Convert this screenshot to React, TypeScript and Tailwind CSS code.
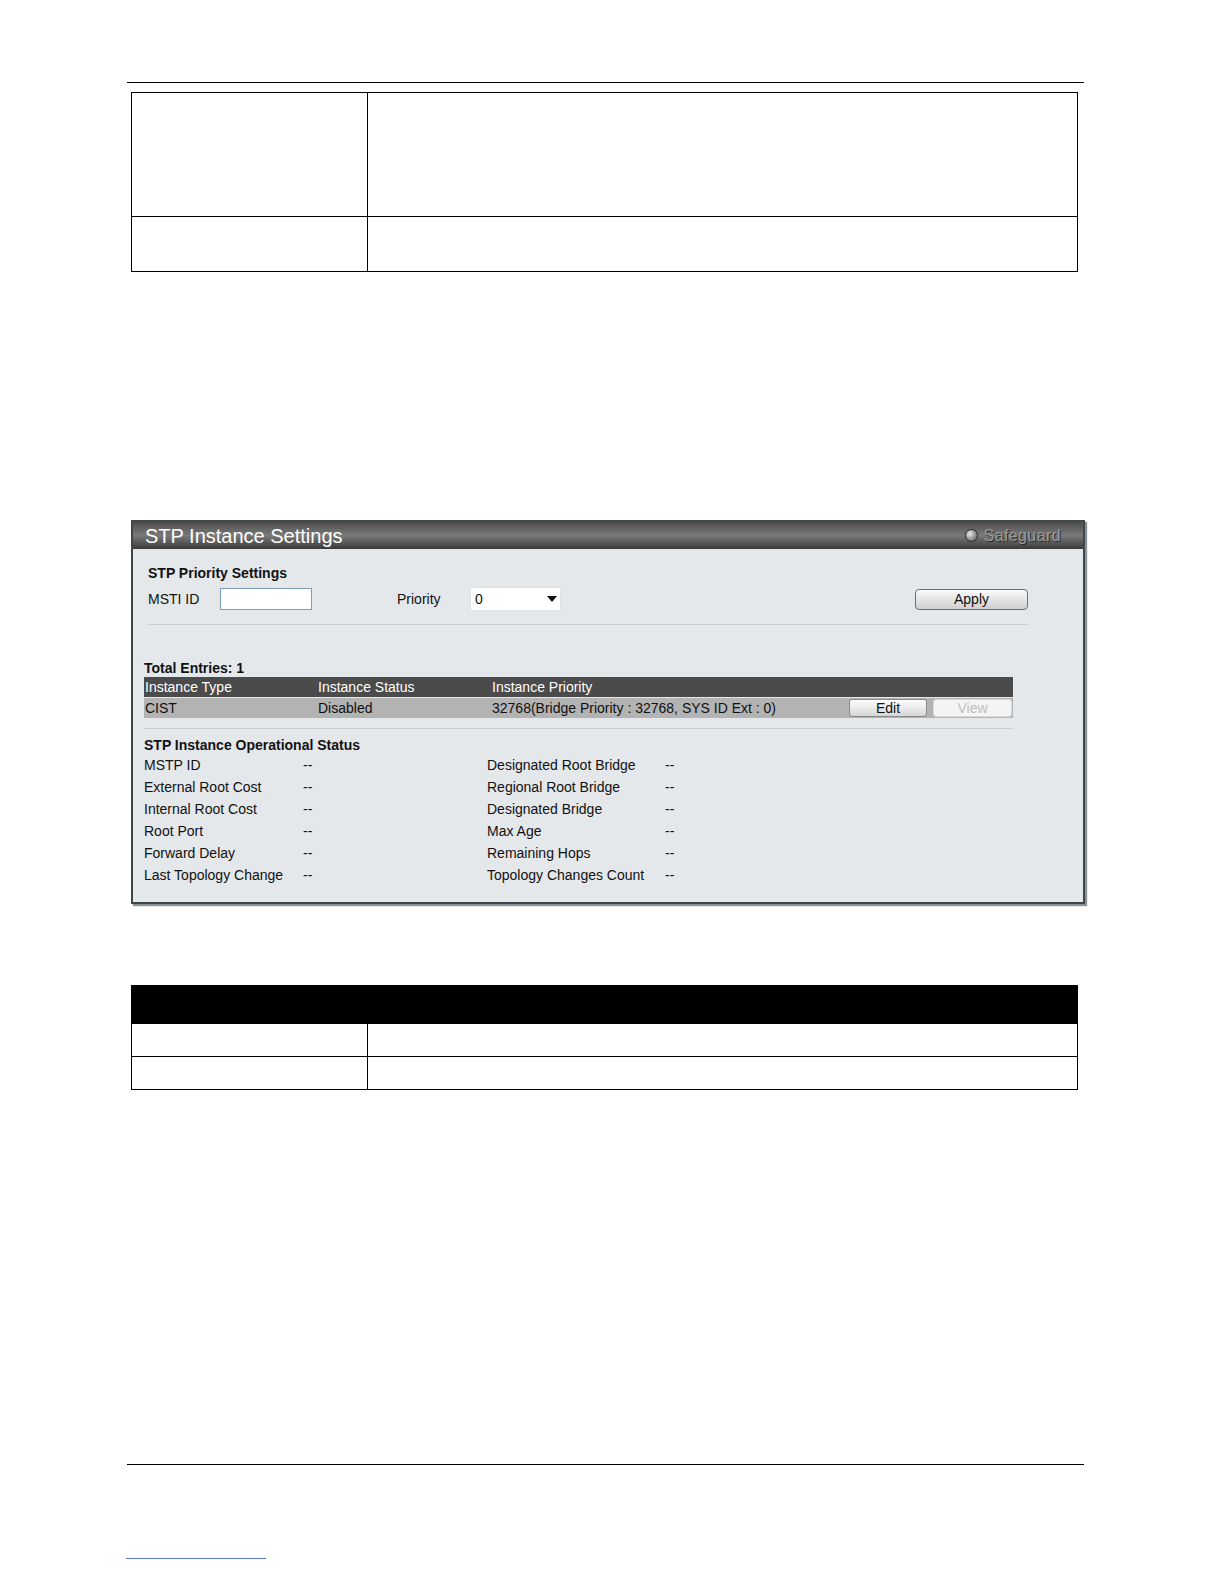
import React from "react";

const font = { fontFamily: '"Liberation Sans", Arial, sans-serif' };

function StatusRow({ l1, l2 }: { l1: string; l2: string }) {
  return (
    <div className="flex h-[22px] items-center text-[14px] text-[#111]">
      <div className="w-[159px]">{l1}</div>
      <div className="w-[184px]">--</div>
      <div className="w-[178px]">{l2}</div>
      <div>--</div>
    </div>
  );
}

export default function App() {
  return (
    <div className="relative w-[1224px] h-[1584px] bg-white overflow-hidden" style={font}>
      {/* header rule */}
      <div className="ml-[127px] w-[957px] pt-[82px]">
        <div className="h-px bg-black" />
      </div>

      {/* table 1 */}
      <div className="ml-[131px] mt-[9px] w-[947px] border border-black">
        <div className="flex h-[124px] border-b border-black">
          <div className="w-[236px] border-r border-black" />
          <div className="flex-1" />
        </div>
        <div className="flex h-[54px]">
          <div className="w-[236px] border-r border-black" />
          <div className="flex-1" />
        </div>
      </div>

      {/* panel */}
      <div className="ml-[131px] mt-[248px] w-[954px] h-[384px] border-2 border-[#3f474b] bg-[#e4e8eb] shadow-[2px_2px_1px_#8a9094]">
        <div className="flex h-[27px] items-center justify-between bg-gradient-to-b from-[#4d4d4d] via-[#7a7a7a] to-[#3a3a3a] pl-[12px] pr-[22px]">
          <div className="text-[20px] leading-none text-white">STP Instance Settings</div>
          <div className="flex items-center gap-[6px]">
            <div className="h-[13px] w-[13px] rounded-full border border-[#2b2b2b] bg-[radial-gradient(circle_at_35%_35%,#e8e8e8,#8a8a8a_60%,#4a4a4a)]" />
            <div className="text-[16px] leading-none text-[#9a9a9a] tracking-[0.4px] [text-shadow:1px_1px_0_#2a2a2a]">Safeguard</div>
          </div>
        </div>

        <div className="pl-[11px]">
          {/* STP Priority Settings */}
          <div className="ml-[4px] w-[880px]">
            <div className="mt-[15px] h-[18px] text-[14px] font-bold leading-[18px] text-[#111]">
              STP Priority Settings
            </div>
            <div className="mt-[5px] flex h-[24px] items-center text-[14px] text-[#111]">
              <div className="w-[72px]">MSTI ID</div>
              <div className="h-[22px] w-[92px] border border-[#7f9db9] bg-white" />
              <div className="ml-[85px] w-[73px]">Priority</div>
              <div className="flex h-[24px] w-[91px] items-center justify-between bg-white pl-[5px] pr-[4px] shadow-[inset_0_0_0_1px_#e0e3e6]">
                <span>0</span>
                <svg width="10" height="6" viewBox="0 0 10 6">
                  <path d="M0 0 L10 0 L5 6 Z" fill="#111" />
                </svg>
              </div>
              <div className="ml-auto flex h-[21px] w-[113px] items-center justify-center rounded-[4px] border border-[#6f6f6f] bg-gradient-to-b from-[#fbfbfb] to-[#cfcfcf] text-[14px] text-[#111]">
                Apply
              </div>
            </div>
            <div className="mt-[13px] h-px bg-[#c9cdd0]" />
          </div>

          {/* Total entries */}
          <div className="w-[869px]">
            <div className="mt-[34px] h-[18px] text-[14px] font-bold leading-[18px] text-[#111]">
              Total Entries: 1
            </div>
            <div className="flex h-[20px] items-center bg-[#4b4b4b] text-[14px] text-white">
              <div className="w-[174px] pl-[1px]">Instance Type</div>
              <div className="w-[174px]">Instance Status</div>
              <div>Instance Priority</div>
            </div>
            <div className="mt-px flex h-[20px] items-center bg-[#b3b3b3] text-[14px] text-[#111]">
              <div className="w-[174px] pl-[1px]">CIST</div>
              <div className="w-[174px]">Disabled</div>
              <div className="flex-1">32768(Bridge Priority : 32768, SYS ID Ext : 0)</div>
              <div className="mr-[6px] flex h-[18px] w-[78px] items-center justify-center rounded-[3px] border border-[#8a8a8a] bg-gradient-to-b from-[#fdfdfd] to-[#d6d6d6] text-[#111]">
                Edit
              </div>
              <div className="mr-px flex h-[18px] w-[79px] items-center justify-center rounded-[3px] border border-[#d8d8d8] bg-[#f4f4f4] text-[#bdbdbd]">
                View
              </div>
            </div>
            <div className="mt-[10px] h-px bg-[#c9cdd0]" />
          </div>

          {/* operational status */}
          <div className="mt-[7px] h-[18px] text-[14px] font-bold leading-[18px] text-[#111]">
            STP Instance Operational Status
          </div>
          <StatusRow l1="MSTP ID" l2="Designated Root Bridge" />
          <StatusRow l1="External Root Cost" l2="Regional Root Bridge" />
          <StatusRow l1="Internal Root Cost" l2="Designated Bridge" />
          <StatusRow l1="Root Port" l2="Max Age" />
          <StatusRow l1="Forward Delay" l2="Remaining Hops" />
          <StatusRow l1="Last Topology Change" l2="Topology Changes Count" />
        </div>
      </div>

      {/* table 2 */}
      <div className="ml-[131px] mt-[81px] w-[947px] border border-black">
        <div className="h-[38px] bg-black" />
        <div className="flex h-[33px] border-b border-black">
          <div className="w-[236px] border-r border-black" />
          <div className="flex-1" />
        </div>
        <div className="flex h-[32px]">
          <div className="w-[236px] border-r border-black" />
          <div className="flex-1" />
        </div>
      </div>

      {/* footer rule */}
      <div className="ml-[127px] mt-[374px] w-[957px]">
        <div className="h-px bg-black" />
      </div>

      <div className="ml-[126px] mt-[93px] w-[140px] h-px bg-[#5a7fd0]" />
    </div>
  );
}
